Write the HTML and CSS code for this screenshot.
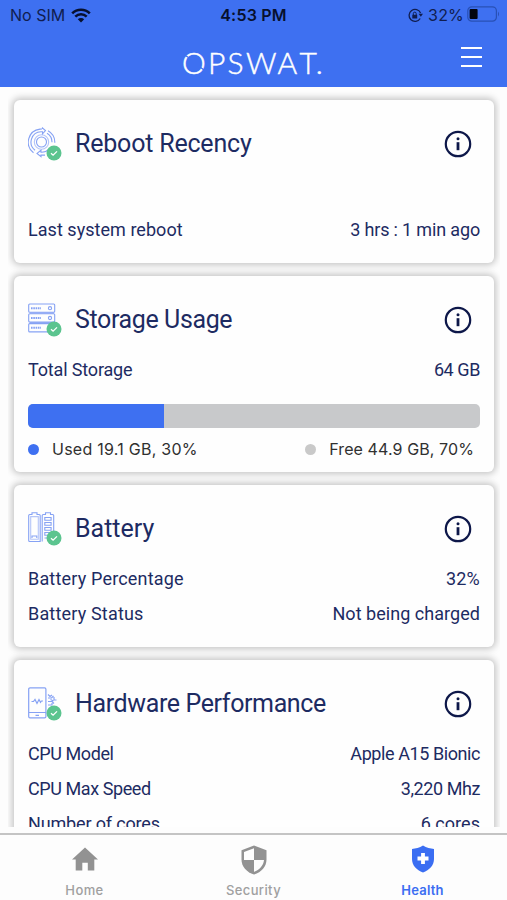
FILE: index.html
```html
<!DOCTYPE html>
<html lang="en">
<head>
<meta charset="utf-8">
<title>Device Health</title>
<link rel="stylesheet" href="styles.css">
</head>
<body>
<svg width="0" height="0" class="defs">
  <symbol id="info" viewBox="0 0 28 28"><circle cx="14" cy="14" r="12.2" fill="none" stroke="#0d1749" stroke-width="2.2"/><circle cx="14" cy="8.8" r="1.5" fill="#0d1749"/><path d="M14 12.2v8" stroke="#0d1749" stroke-width="2.8"/></symbol>
  <symbol id="check" viewBox="0 0 16 16"><circle cx="8" cy="8" r="7.5" fill="#5bc48f"/><path d="M5 8.2l2.1 2L11 6.4" fill="none" stroke="#fff" stroke-width="1.3"/></symbol>
</svg>
<header>
  <div class="status">
    <div class="side"><span>No SIM</span>
      <svg class="wifi" width="20" height="15" viewBox="0 0 20 15"><path d="M1.2 5.4a12.6 12.6 0 0 1 17.6 0M4.3 8.6a8.2 8.2 0 0 1 11.4 0" fill="none" stroke="#07102e" stroke-width="2.6"/><path d="M6.8 11.2a4.6 4.6 0 0 1 6.4 0L10 14.5z" fill="#07102e"/></svg>
    </div>
    <b>4:53 PM</b>
    <div class="side right">
      <svg class="lock" width="15" height="15" viewBox="0 0 15 15"><path d="M12.6 5A6 6 0 1 0 12.2 10.5" fill="none" stroke="#101d50" stroke-width="1.3"/><path d="M10.6 5.8h4.4l-2.2 3z" fill="#101d50"/><path d="M4.3 6.8h4.9v3.7H4.3z" fill="#101d50"/><path d="M5.3 7V5.6a1.45 1.45 0 0 1 2.9 0V7" fill="none" stroke="#101d50"/></svg>
      <span class="pct">32%</span>
      <svg class="cell" width="33" height="16" viewBox="0 0 33 16"><rect x=".8" y=".8" width="28.6" height="14.4" rx="4" fill="none" stroke="#2850b5" stroke-width="1.2"/><rect x="2.6" y="3" width="8" height="10" rx="1" fill="#020510"/><path d="M31 5.5q2 2.5 0 5z" fill="#2850b5"/></svg>
    </div>
  </div>
  <div class="brand">
    <span class="logo">OPSWA<span class="t">T</span>.</span>
    <svg class="cuts" width="140" height="24" viewBox="0 0 140 24"><path d="M2.5 5l4 2.5M18 17l4 3" stroke="#3e70f1" stroke-width="1.3"/></svg>
    <div class="menu"><i></i><i></i><i></i></div>
  </div>
</header>
<main>
  <section class="card reboot">
    <div class="head">
      <div class="icon"><svg width="30" height="32" viewBox="0 0 30 32"><g fill="none" stroke="#86a2f4" stroke-width="1.1"><circle cx="13.5" cy="15" r="5"/><circle cx="13.5" cy="15" r="7.2" stroke="#b5c5f8"/><path d="M5.5 25.7A13.2 13.2 0 0 1 12 2.1l2-.1M7 23.2A10.3 10.3 0 0 1 13 4.8h1.5v2.1l3-3.3-3-2.6v1M20 3.7a13.2 13.2 0 0 1 6.8 12M19 6.3a10.3 10.3 0 0 1 5 9M21 22.2a10.3 10.3 0 0 1-8 3.1v-2.1L9 26.4l4 3.2v-1.5h4"/></g></svg><svg class="ok"><use href="#check"/></svg></div>
      <h2>Reboot Recency</h2><svg class="info"><use href="#info"/></svg>
    </div>
    <div class="row"><span>Last system reboot</span><span class="snug">3 hrs : 1 min ago</span></div>
  </section>
  <section class="card storage">
    <div class="head">
      <div class="icon"><svg width="30" height="32" viewBox="0 0 30 32"><g fill="none" stroke="#86a2f4" stroke-width="1.1"><rect x=".7" y="1" width="26" height="8.3" rx="1"/><rect x=".7" y="10.8" width="26" height="8.3" rx="1"/><rect x=".7" y="20.6" width="26" height="8.3" rx="1"/><path d="M3 5.2h10M3 15h10M3 24.8h10" stroke-width="2" stroke-dasharray="1.6 .7"/><circle cx="22" cy="5.2" r="1.6"/><circle cx="22" cy="15" r="1.6"/><path d="M2 10h24M2 19.8h24"/></g></svg><svg class="ok"><use href="#check"/></svg></div>
      <h2>Storage Usage</h2><svg class="info"><use href="#info"/></svg>
    </div>
    <div class="row"><span class="snug">Total Storage</span><span class="tight">64 GB</span></div>
    <div class="bar"><div class="used" style="width:30%"></div></div>
    <div class="legend"><span class="key blue">Used 19.1 GB, 30%</span><span class="key">Free 44.9 GB, 70%</span></div>
  </section>
  <section class="card battery">
    <div class="head">
      <div class="icon"><svg width="30" height="32" viewBox="0 0 30 32"><g fill="none" stroke="#86a2f4" stroke-width="1.1"><path d="M.7 28.5V3.5q0-1 1-1H4V.8h5v1.7h2.2q1 0 1 1v26H1.7q-1 0-1-1zM14.2 29.5v-26q0-1 1-1h2.3V.8h5v1.7h2.2q1 0 1 1v19"/><path d="M2.7 27.3V4.6h7.6v22.7z" stroke="#b5c5f8"/><path d="M4 26v-2h4.8v2M16.8 5.5h6.3v2.8h-6.3zM16.8 10.5h6.3v2.8h-6.3zM16.8 15.5h6.3v2.8h-6.3zM16.8 20.5h5v2.8h-5zM16.5 26h3"/></g></svg><svg class="ok"><use href="#check"/></svg></div>
      <h2>Battery</h2><svg class="info"><use href="#info"/></svg>
    </div>
    <div class="row"><span class="loose">Battery Percentage</span><span class="loose">32%</span></div>
    <div class="row"><span class="loose">Battery Status</span><span>Not being charged</span></div>
  </section>
  <section class="card hardware">
    <div class="head">
      <div class="icon"><svg width="30" height="32" viewBox="0 0 30 32"><g fill="none" stroke="#86a2f4" stroke-width="1.2"><rect x=".7" y=".9" width="17.2" height="30" rx="1.3"/><path d="M1 25.5h17M7.5 28.3h3.5M3.5 14.5h2l1.5-2 2 4 2-4 1.5 2.8 1-1.3h1.5"/><path d="M20 7.5l2 2 2-1.5M20 11h3.5l2-2M20 14.5h4l2 2M20 18h4v-2M26 10v3h2.5M22.500 12.500l3 1.500"/></g></svg><svg class="ok"><use href="#check"/></svg></div>
      <h2>Hardware Performance</h2><svg class="info"><use href="#info"/></svg>
    </div>
    <div class="row"><span class="tight">CPU Model</span><span class="tight">Apple A15 Bionic</span></div>
    <div class="row"><span class="tight">CPU Max Speed</span><span class="tight">3,220 Mhz</span></div>
    <div class="row"><span class="snug">Number of cores</span><span>6 cores</span></div>
  </section>
</main>
<nav>
  <a><svg width="28" height="28" viewBox="0 0 28 28"><path d="M14 2.5L27 14.5h-3.7v11h-6.500v-7.800h-5.500v7.800H4.700v-11H1z" fill="#929292"/></svg>Home</a>
  <a><svg width="28" height="30" viewBox="0 0 28 30"><path d="M14 .5l12.500 4.700v9.300c0 7-5 12.700-12.500 15-7.500-2.300-12.500-8-12.500-15V5.200z" fill="#929292"/><path d="M14 3.300v11.700H4V7zM14 15h10c-.5 5.500-4.500 9.800-10 11.800z" fill="#fdfdfd"/></svg>Security</a>
  <a class="active"><svg width="24" height="28" viewBox="0 0 24 28"><path d="M12 .6C8.500 3 4.500 3.800 1 4v10c0 6.500 4.500 11 11 13.500C18.500 25 23 20.500 23 14V4C19.500 3.800 15.500 3 12 .6z" fill="#3b6ef2"/><path d="M12 8v11M6.500 13.500h11" stroke="#fff" stroke-width="3.800"/></svg>Health</a>
</nav>
</body>
</html>
```
FILE: styles.css
```css
* { box-sizing: border-box; }
body {
  margin: 0;
  width: 507px;
  height: 900px;
  overflow: hidden;
  display: flex;
  flex-direction: column;
  background: #fdfdfd;
  font-family: Roboto, sans-serif;
  color: #1d2b62;
}
.defs { position: absolute; }
header { height: 87px; flex: none; background: #3e70f1; }
.status {
  height: 30px;
  padding: 0 7px 0 10px;
  display: grid;
  grid-template-columns: 1fr auto 1fr;
  align-items: center;
  font: 16px/30px Inter, sans-serif;
  color: #101d50;
}
.status b { font-weight: 600; font-size: 16px; letter-spacing: .2px; margin-right: 3px; color: #07102e; }
.side { display: flex; align-items: center; }
.side.right { justify-content: flex-end; }
.wifi { margin-left: 6px; }
.lock { margin-right: 5px; }
.pct { letter-spacing: .2px; }
.cell { margin-left: 3px; margin-top: -2px; }
.brand {
  height: 57px;
  display: grid;
  grid-template-columns: 1fr auto 1fr;
  align-items: start;
}
.logo {
  grid-area: 1 / 2;
  margin-top: 14px;
  font: 300 30px/36px Lato, sans-serif;
  letter-spacing: 2.3px;
  color: #fff;
  -webkit-text-stroke: .45px #fff;
}
.logo .t { letter-spacing: -1.2px; }
.cuts { grid-area: 1 / 2; margin-top: 20px; }
.menu {
  grid-area: 1 / 3;
  justify-self: end;
  margin: 17px 25px 0 0;
  width: 21px;
  display: grid;
  gap: 7px;
}
.menu i { height: 2px; background: #fff; }
main {
  height: 740px;
  margin: 0 7px 0 8px;
  padding: 13px 6px 0;
  overflow: hidden;
  display: flex;
  flex-direction: column;
  gap: 13px;
}
.card {
  flex: none;
  background: #fefefe;
  border-radius: 6px;
  box-shadow: 0 0 7px 2px rgba(0, 0, 0, .23);
  padding: 26px 14px 0;
}
.reboot { height: 163px; }
.storage { height: 196px; }
.battery { height: 162px; }
.hardware { height: 300px; }
.head { display: flex; align-items: center; height: 34px; margin-bottom: 17px; }
.reboot .head { margin-bottom: 53px; }
.icon { position: relative; width: 34px; height: 32px; margin-right: 13px; }
.icon > svg { display: block; }
.icon .ok { position: absolute; width: 16px; height: 16px; left: 18px; top: 18px; }
h2 { margin: 0; flex: 1; font-weight: 400; font-size: 25px; letter-spacing: -.38px; }
.reboot h2 { letter-spacing: -.2px; }
.battery h2 { letter-spacing: 0; }
.info { width: 28px; height: 28px; margin: 2px 8px 0 0; }
.row {
  display: flex;
  justify-content: space-between;
  height: 35px;
  line-height: 34px;
  font-size: 18px;
  letter-spacing: .04px;
}
.loose { letter-spacing: .18px; }
.snug { letter-spacing: -.16px; }
.tight { letter-spacing: -.42px; }
.bar {
  height: 24px;
  margin-top: 16px;
  border-radius: 5px;
  overflow: hidden;
  background: #c8c9cb;
}
.used { height: 100%; background: #3e70f1; }
.legend {
  display: flex;
  justify-content: space-between;
  padding-right: 6px;
  margin-top: 11px;
  font: 16px/20px Inter, sans-serif;
  letter-spacing: .1px;
  color: #303030;
}
.key { display: flex; align-items: center; }
.key::before {
  content: "";
  width: 11px;
  height: 11px;
  margin-right: 13px;
  border-radius: 50%;
  background: #c9c9c9;
}
.key.blue { letter-spacing: .25px; }
.key.blue::before { background: #3e70f1; }
nav {
  margin-top: 6px;
  border-top: 2px solid #c4c4c4;
  height: 67px;
  display: grid;
  grid-template-columns: repeat(3, 1fr);
  font: 500 13px/16px Inter, sans-serif;
  letter-spacing: .4px;
  color: #a0a0a0;
}
nav a { display: flex; flex-direction: column; align-items: center; justify-content: space-between; padding: 10px 0 2px; }
nav .active { color: #3b6ef2; font-weight: 600; letter-spacing: .2px; }
```
